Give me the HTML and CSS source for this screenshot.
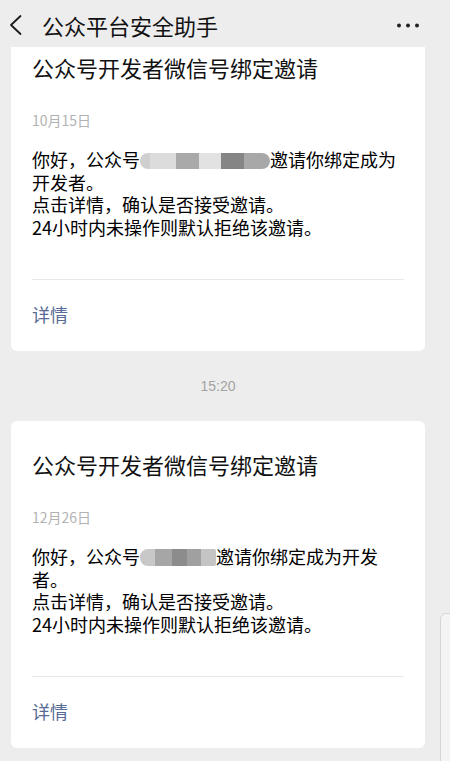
FILE: index.html
```html
<!DOCTYPE html>
<html lang="zh-CN">
<head>
<meta charset="utf-8">
<title>公众平台安全助手</title>
<link rel="stylesheet" href="styles.css">
</head>
<body>
<header class="nav">
  <svg class="back" width="24" height="50" viewBox="0 0 24 50"><polyline points="20.5,16 11,25 20.5,34" fill="none" stroke="#1a1a1a" stroke-width="1.8" stroke-linecap="round" stroke-linejoin="round"/></svg>
  <h1 class="nav-title">公众平台安全助手</h1>
  <svg class="more" width="26" height="50" viewBox="0 0 26 50"><circle cx="4" cy="25.5" r="2"/><circle cx="13" cy="25.5" r="2"/><circle cx="22" cy="25.5" r="2"/></svg>
</header>
<main class="chat">
  <section class="card card-first">
    <h2 class="card-title">公众号开发者微信号绑定邀请</h2>
    <div class="card-date">10月15日</div>
    <p class="card-body">你好，公众号<span class="blur blur-a"></span>邀请你绑定成为开发者。<br>点击详情，确认是否接受邀请。<br>24小时内未操作则默认拒绝该邀请。</p>
    <div class="card-foot"><a class="card-link">详情</a></div>
  </section>
  <div class="time">15:20</div>
  <section class="card">
    <h2 class="card-title">公众号开发者微信号绑定邀请</h2>
    <div class="card-date">12月26日</div>
    <p class="card-body">你好，公众号<span class="blur blur-b"></span>邀请你绑定成为开发者。<br>点击详情，确认是否接受邀请。<br>24小时内未操作则默认拒绝该邀请。</p>
    <div class="card-foot"><a class="card-link">详情</a></div>
  </section>
</main>
<div class="edge"></div>
</body>
</html>
```
FILE: styles.css
```css
* { box-sizing: border-box; }
html, body {
  margin: 0;
  padding: 0;
  background: #ededed;
  width: 450px;
  height: 761px;
  overflow: hidden;
  font-family: "Noto Sans CJK SC", "Noto Sans", sans-serif;
  color: #111;
}
.nav {
  position: relative;
  z-index: 2;
  height: 47px;
  background: #ededed;
  display: flex;
  align-items: flex-start;
}
.back { display: block; flex: none; }
.nav-title {
  margin: 0 0 0 18px;
  font-size: 22px;
  font-weight: 400;
  line-height: 50px;
  height: 50px;
  color: #111;
  flex: 1;
}
.more { display: block; flex: none; margin-right: 29px; fill: #222; }
.chat {
  display: flex;
  flex-direction: column;
  padding: 0 25px 0 11px;
}
.card {
  position: relative;
  z-index: 1;
  background: #fff;
  border-radius: 6px;
  padding: 28px 21px 24px 21px;
  height: 327px;
}
.card-first { margin-top: -23px; }
.card-title {
  margin: 0;
  font-size: 22px;
  font-weight: 400;
  line-height: 30px;
  color: #111;
}
.card-date {
  margin-top: 28px;
  font-size: 14px;
  line-height: 20px;
  color: #b2b2b2;
}
.card-body {
  margin: 18px 0 0;
  font-size: 18px;
  line-height: 22.5px;
  color: #000;
  height: 90px;
}
.blur {
  display: inline-block;
  vertical-align: -2px;
  height: 16px;
  border-radius: 8px;
}
.blur-a {
  width: 130px;
  background: linear-gradient(90deg, #cfcfcf 0 8%, #dcdcdc 8% 28%, #a9a9a9 28% 45%, #e2e2e2 45% 62%, #858585 62% 80%, #a8a8a8 80% 100%);
}
.blur-b {
  width: 76px;
  height: 17px;
  border-radius: 8px 2px 2px 8px;
  background: linear-gradient(90deg, #c8c8c8 0 20%, #a6a6a6 20% 42%, #8c8c8c 42% 62%, #a0a0a0 62% 80%, #c4c4c4 80% 100%);
}
.card-foot {
  margin-top: 41px;
  border-top: 1px solid #e8e8e8;
  padding-top: 22px;
}
.card-link {
  display: block;
  font-size: 18px;
  line-height: 24px;
  color: #576b95;
}
.time {
  height: 70px;
  display: flex;
  align-items: center;
  justify-content: center;
  font-size: 14px;
  color: #a3a3a3;
  font-family: "Liberation Sans", "Noto Sans", sans-serif;
}
.edge {
  position: absolute;
  left: 440px;
  top: 613px;
  width: 20px;
  height: 160px;
  border: 1px solid #d6d6d6;
  border-radius: 6px 0 0 0;
  background: #f4f4f4;
}
```
